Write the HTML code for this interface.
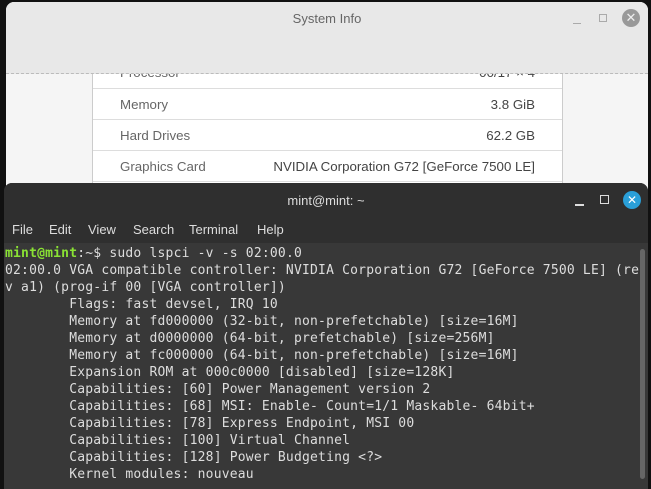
<!DOCTYPE html>
<html><head><meta charset="utf-8"><style>
*{margin:0;padding:0;box-sizing:border-box}
body{width:651px;height:489px;overflow:hidden;background:#111;position:relative;font-family:"Liberation Sans","DejaVu Sans",sans-serif}
#si{position:absolute;left:6px;top:2px;width:642px;height:200px;background:#f5f5f5;border-radius:8px 8px 0 0;overflow:hidden}
#sih{position:absolute;left:0;top:0;width:100%;height:72px;background:#e8e8e8;border-bottom:1px dashed #bbb}
#sih .t{position:absolute;top:9px;width:100%;text-align:center;font-size:13px;color:#666}
#list{position:absolute;left:86px;top:50px;width:471px;height:160px;background:#fff;border-left:1px solid #ccc;border-right:1px solid #ccc}
.row{position:absolute;left:0;width:100%;height:31px;border-bottom:1px solid #ddd;font-size:13.3px;color:#666}
.row .l{position:absolute;left:27px;top:8px}
.row .r{position:absolute;right:27px;top:8px;color:#444}
#term{position:absolute;left:4px;top:183px;width:644px;height:306px;background:#383838;border-radius:8px 8px 0 0;overflow:hidden}
#th{height:35px;background:#2f2f2f;position:relative}
#th .t{position:absolute;width:100%;top:10px;text-align:center;color:#ddd;font-size:13px}
#menu{height:25px;background:#2f2f2f;color:#ddd;font-size:13px;position:relative}
#menu span{position:absolute;top:4px}
pre{position:absolute;left:1px;top:62px;font-family:"DejaVu Sans Mono","Liberation Mono",monospace;font-size:13px;letter-spacing:0.2px;line-height:17px;color:#ddd}
.g{color:#8ae234;font-weight:bold}
#sb{position:absolute;right:3px;top:66px;width:5px;height:230px;background:#666;border-radius:3px}
</style></head><body>
<div id="si">
 <div id="list">
  <div class="row" style="top:0;height:37px"><span class="l" style="top:13px">Processor</span><span class="r" style="top:13px">00/17 × 4</span></div>
  <div class="row" style="top:37px"><span class="l">Memory</span><span class="r">3.8 GiB</span></div>
  <div class="row" style="top:68px"><span class="l">Hard Drives</span><span class="r">62.2 GB</span></div>
  <div class="row" style="top:99px"><span class="l">Graphics Card</span><span class="r">NVIDIA Corporation G72 [GeForce 7500 LE]</span></div>
 </div>
 <div id="sih"><div class="t">System Info</div>
  <div style="position:absolute;left:567px;top:21px;width:8px;height:1px;background:#aaa"></div>
  <div style="position:absolute;left:593px;top:12px;width:8px;height:8px;border:1px solid #aaa"></div>
  <div style="position:absolute;left:616px;top:7px;width:18px;height:18px;border-radius:50%;background:#999;color:#eee;font-size:13px;font-weight:bold;text-align:center;line-height:18px">✕</div>
 </div>
</div>
<div id="term">
 <div id="th"><div class="t">mint@mint: ~</div>
  <div style="position:absolute;left:571px;top:21px;width:9px;height:1.5px;background:#ddd"></div>
  <div style="position:absolute;left:596px;top:12px;width:9px;height:9px;border:1.5px solid #ddd"></div>
  <div style="position:absolute;left:619px;top:8px;width:18px;height:18px;border-radius:50%;background:#2a9fd8;color:#fff;font-size:12px;font-weight:bold;text-align:center;line-height:18px">✕</div>
 </div>
 <div id="menu"><span style="left:8px">File</span><span style="left:45px">Edit</span><span style="left:84px">View</span><span style="left:129px">Search</span><span style="left:185px">Terminal</span><span style="left:253px">Help</span></div>
<pre><span class="g">mint@mint</span>:~$ sudo lspci -v -s 02:00.0
02:00.0 VGA compatible controller: NVIDIA Corporation G72 [GeForce 7500 LE] (re
v a1) (prog-if 00 [VGA controller])
        Flags: fast devsel, IRQ 10
        Memory at fd000000 (32-bit, non-prefetchable) [size=16M]
        Memory at d0000000 (64-bit, prefetchable) [size=256M]
        Memory at fc000000 (64-bit, non-prefetchable) [size=16M]
        Expansion ROM at 000c0000 [disabled] [size=128K]
        Capabilities: [60] Power Management version 2
        Capabilities: [68] MSI: Enable- Count=1/1 Maskable- 64bit+
        Capabilities: [78] Express Endpoint, MSI 00
        Capabilities: [100] Virtual Channel
        Capabilities: [128] Power Budgeting &lt;?&gt;
        Kernel modules: nouveau</pre>
 <div id="sb"></div>
</div>
</body></html>
